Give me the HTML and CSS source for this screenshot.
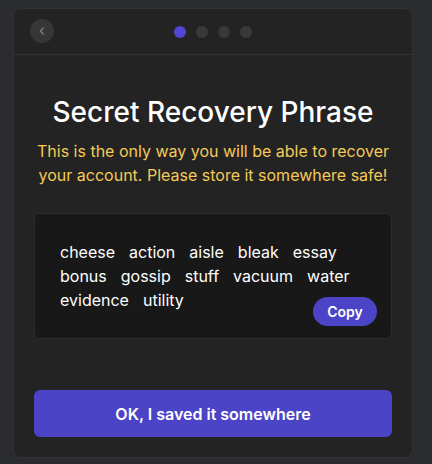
FILE: index.html
```html
<!DOCTYPE html>
<html lang="en">
<head>
    <meta charset="UTF-8">
    <meta name="viewport" content="width=device-width, initial-scale=1.0">
    <title>Secret Recovery Phrase</title>
    <link rel="stylesheet" href="styles.css">
</head>
<body>
    <div class="card">
        <div class="card-header">
            <button class="back-button" aria-label="Back">
                <svg width="10" height="10" viewBox="0 0 10 10">
                    <path d="M6.2 2 L3.4 5 L6.2 8" fill="none" stroke="#7a7a7a" stroke-width="1.6" stroke-linecap="round" stroke-linejoin="round"/>
                </svg>
            </button>
            <div class="steps">
                <span class="step active"></span>
                <span class="step"></span>
                <span class="step"></span>
                <span class="step"></span>
            </div>
        </div>

        <div class="card-body">
            <h1>Secret Recovery Phrase</h1>
            <p class="warning">This is the only way you will be able to recover your account. Please store it somewhere safe!</p>

            <div class="phrase-box">
                <div class="words">
                    <span>cheese</span>
                    <span>action</span>
                    <span>aisle</span>
                    <span>bleak</span>
                    <span>essay</span>
                    <span>bonus</span>
                    <span>gossip</span>
                    <span>stuff</span>
                    <span>vacuum</span>
                    <span>water</span>
                    <span>evidence</span>
                    <span>utility</span>
                </div>
                <button class="copy-button">Copy</button>
            </div>

            <button class="primary-button">OK, I saved it somewhere</button>
        </div>
    </div>
</body>
</html>
```

FILE: styles.css
```css
body {
    margin: 0;
    background-color: #2b2c30;
    font-family: Inter, "Noto Sans", sans-serif;
    color: #fff;
}
.card {
    box-sizing: border-box;
    width: 400px;
    height: 450px;
    margin: 8px 0 0 13px;
    background-color: #232323;
    border: 1px solid #333333;
    border-radius: 8px;
    display: flex;
    flex-direction: column;
}
.card-header {
    position: relative;
    height: 45px;
    border-bottom: 1px solid #333333;
    display: flex;
    align-items: center;
    justify-content: center;
}
.back-button {
    position: absolute;
    left: 16px;
    top: 10px;
    width: 24px;
    height: 24px;
    padding: 0;
    border: none;
    border-radius: 50%;
    background-color: #363636;
    display: flex;
    align-items: center;
    justify-content: center;
    cursor: pointer;
}
.steps {
    display: flex;
    gap: 10px;
}
.step {
    width: 12px;
    height: 12px;
    border-radius: 50%;
    background-color: #393939;
}
.step.active {
    background-color: #5046d5;
}
.card-body {
    flex: 1;
    display: flex;
    flex-direction: column;
    padding: 0 20px 20px;
}
h1 {
    margin: 40px 0 0;
    font-size: 28px;
    font-weight: 500;
    line-height: 34px;
    text-align: center;
}
.warning {
    margin: 10px 0 0;
    color: #f4ca58;
    font-size: 16px;
    line-height: 24px;
    text-align: center;
}
.phrase-box {
    position: relative;
    margin-top: 26px;
    padding: 26px 25px 26px;
    min-height: 123px;
    box-sizing: border-box;
    background-color: #181818;
    border: 1px solid #2c2c2c;
    border-radius: 6px;
}
.words {
    display: flex;
    flex-wrap: wrap;
    gap: 0 14px;
    font-size: 16px;
    line-height: 24px;
}
.copy-button {
    position: absolute;
    right: 14px;
    bottom: 12px;
    width: 64px;
    height: 29px;
    border: none;
    border-radius: 15px;
    background-color: #4c44c6;
    color: #fff;
    font-family: Inter, "Noto Sans", sans-serif;
    font-size: 14px;
    font-weight: 600;
    cursor: pointer;
}
.primary-button {
    margin-top: auto;
    height: 47px;
    border: none;
    border-radius: 6px;
    background-color: #4c44c6;
    color: #fff;
    font-family: Inter, "Noto Sans", sans-serif;
    font-size: 16px;
    font-weight: 600;
    cursor: pointer;
}
```
